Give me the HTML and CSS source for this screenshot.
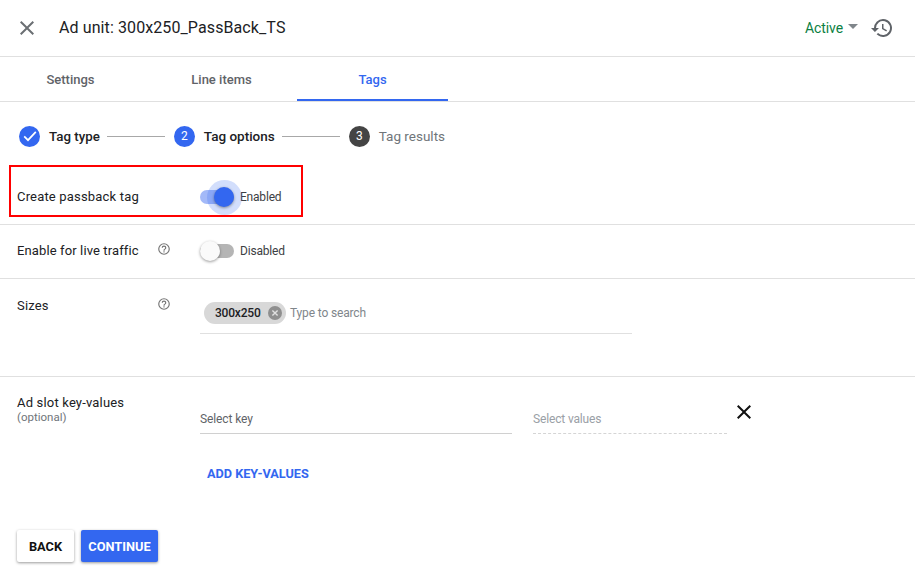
FILE: index.html
```html
<!DOCTYPE html>
<html lang="en">
<head>
<meta charset="utf-8">
<title>Ad unit</title>
<link rel="stylesheet" href="styles.css">
</head>
<body>
<header class="topbar">
  <svg class="close" width="24" height="24" viewBox="0 0 24 24"><path d="M19 6.41 17.59 5 12 10.59 6.41 5 5 6.41 10.59 12 5 17.59 6.41 19 12 13.41 17.59 19 19 17.59 13.41 12z"/></svg>
  <h1 class="title">Ad unit: 300x250_PassBack_TS</h1>
  <span class="status">Active</span>
  <span class="caret"></span>
  <svg class="history" width="24" height="24" viewBox="0 0 24 24"><path d="M13 3a9 9 0 0 0-9 9H1l3.89 3.89.07.14L9 12H6a7 7 0 1 1 2.05 4.95l-1.42 1.42A9 9 0 1 0 13 3zm-1 5v5l4.28 2.54.72-1.21-3.5-2.08V8z"/></svg>
</header>
<nav class="tabs">
  <span class="tab">Settings</span>
  <span class="tab">Line items</span>
  <span class="tab tab-active">Tags</span>
</nav>
<div class="stepper">
  <span class="dot dot-blue"><svg width="18" height="18" viewBox="0 0 18 18"><path d="M3.2 9.4 7 13.2l7.8-8.4" fill="none" stroke="#fff" stroke-width="1.7"/></svg></span>
  <span class="step step-one">Tag type</span>
  <span class="line"></span>
  <span class="dot dot-blue">2</span>
  <span class="step step-two">Tag options</span>
  <span class="line"></span>
  <span class="dot dot-dark">3</span>
  <span class="step step-muted">Tag results</span>
</div>
<section class="row row-pass">
  <div class="label">Create passback tag</div>
  <div class="toggle toggle-on"><span class="track"></span><span class="halo"></span><span class="knob"></span></div>
  <span class="state">Enabled</span>
  <div class="redbox"></div>
</section>
<section class="row row-live">
  <div class="label">Enable for live traffic</div>
  <svg class="help" width="14" height="14" viewBox="0 0 24 24"><path d="M11 18h2v-2h-2v2zm1-16a10 10 0 1 0 0 20 10 10 0 0 0 0-20zm0 18a8 8 0 1 1 0-16 8 8 0 0 1 0 16zm0-14a4 4 0 0 0-4 4h2a2 2 0 1 1 4 0c0 2-3 1.75-3 5h2c0-2.25 3-2.5 3-5a4 4 0 0 0-4-4z"/></svg>
  <div class="toggle toggle-off"><span class="track"></span><span class="knob"></span></div>
  <span class="state">Disabled</span>
</section>
<section class="row row-sizes">
  <div class="label">Sizes</div>
  <svg class="help" width="14" height="14" viewBox="0 0 24 24"><path d="M11 18h2v-2h-2v2zm1-16a10 10 0 1 0 0 20 10 10 0 0 0 0-20zm0 18a8 8 0 1 1 0-16 8 8 0 0 1 0 16zm0-14a4 4 0 0 0-4 4h2a2 2 0 1 1 4 0c0 2-3 1.75-3 5h2c0-2.25 3-2.5 3-5a4 4 0 0 0-4-4z"/></svg>
  <div class="sizes-field">
    <span class="chip">300x250<svg width="14" height="14" viewBox="0 0 14 14"><circle cx="7" cy="7" r="7" fill="#8f8f8f"/><path d="m4.4 4.4 5.2 5.2m0-5.2-5.2 5.2" stroke="#e0e0e0" stroke-width="1.4"/></svg></span>
    <span class="placeholder">Type to search</span>
  </div>
</section>
<section class="row-kv">
  <div class="kv-label">
    <div class="label">Ad slot key-values</div>
    <div class="optional">(optional)</div>
  </div>
  <div class="key-field">Select key</div>
  <div class="values-field">Select values</div>
  <svg class="kv-x" width="24" height="24" viewBox="0 0 24 24"><path d="M19 6.41 17.59 5 12 10.59 6.41 5 5 6.41 10.59 12 5 17.59 6.41 19 12 13.41 17.59 19 19 17.59 13.41 12z"/></svg>
</section>
<div class="add">ADD KEY-VALUES</div>
<footer class="actions">
  <button class="btn btn-back">BACK</button>
  <button class="btn btn-continue">CONTINUE</button>
</footer>
</body>
</html>
```

FILE: styles.css
```css
* { box-sizing: border-box; }
html, body { margin: 0; padding: 0; }
body {
  width: 915px;
  height: 588px;
  overflow: hidden;
  background: #fff;
  font-family: Roboto, "Liberation Sans", sans-serif;
  color: #212121;
}
.topbar {
  height: 57px;
  border-bottom: 1px solid #e0e0e0;
  display: flex;
  align-items: center;
  padding: 0 21px 1px 15px;
}
.close { fill: #6b6f73; flex: none; }
.title {
  margin: 0 0 0 20px;
  font-size: 16px;
  font-weight: 400;
  color: #202124;
  letter-spacing: 0.1px;
  flex: 1;
}
.status { color: #0b8043; font-size: 14px; letter-spacing: -0.1px; margin-top: 1px; }
.caret {
  width: 0; height: 0;
  margin: 0 0 2px 5px;
  border-left: 5px solid transparent;
  border-right: 5px solid transparent;
  border-top: 5px solid #80868b;
}
.history { fill: #5f6368; margin-left: 12px; }
.tabs {
  height: 45px;
  display: flex;
  padding-left: 0;
  border-bottom: 1px solid #e0e0e0;
}
.tab {
  width: 151px;
  text-align: center;
  font-size: 13px;
  font-weight: 500;
  line-height: 46px;
  color: #5f6368;
  height: 44px;
}
.tab:nth-child(1) { width: 141px; }
.tab:nth-child(2) { width: 156px; padding-left: 5px; }
.tab-active {
  color: #3367f0;
  border-bottom: 2px solid #3367f0;
}
.stepper {
  display: flex;
  align-items: center;
  height: 68px;
  margin-bottom: 1px;
  padding: 0 0 0 19px;
}
.dot {
  width: 21px; height: 21px;
  border-radius: 50%;
  color: #fff;
  font-size: 12px;
  display: flex;
  align-items: center;
  justify-content: center;
  flex: none;
}
.dot-blue { background: #3367f0; }
.dot-dark { background: #444; }
.step { font-size: 13.5px; margin-left: 9px; color: #202124; white-space: nowrap; font-weight: 500; }
.step-one { font-size: 13.3px; }
.step-muted { color: #70757a; font-weight: 400; }
.line { width: 58px; height: 1px; background: #a8a8a8; margin: 0 9px 0 7px; flex: none; }
.row {
  display: flex;
  align-items: center;
  position: relative;
  border-bottom: 1px solid #e0e0e0;
  padding-left: 17px;
}
.label { font-size: 13px; color: #202124; letter-spacing: 0.18px; }
.row-pass { height: 54px; padding-bottom: 2px; }
.row-pass .label { width: 183px; }
.row-live { height: 54px; padding-bottom: 2px; }
.row-live .label { width: 140px; letter-spacing: 0.12px; }
.help { fill: #757575; margin-right: 29px; flex: none; }
.row-live .help { margin-top: -3px; }
.toggle { position: relative; width: 34px; height: 14px; flex: none; }
.track { position: absolute; inset: 0; border-radius: 7px; }
.toggle-on .track { background: #a3b9f8; }
.toggle-off .track { background: #b5b5b5; }
.knob {
  position: absolute;
  top: -3px;
  width: 20px; height: 20px;
  border-radius: 50%;
  box-shadow: 0 1px 3px rgba(0,0,0,.4);
}
.toggle-on .knob { background: #3367f0; right: 0; }
.toggle-off .knob { background: #fafafa; left: 0; }
.halo {
  position: absolute;
  left: 7px; top: -10px;
  width: 35px; height: 35px;
  border-radius: 50%;
  background: rgba(51,103,240,.22);
}
.state { font-size: 12px; letter-spacing: -0.2px; margin-left: 6px; color: #3c4043; }
.redbox {
  position: absolute;
  left: 9px; top: -6px;
  width: 294px; height: 52px;
  border: 2px solid #f00;
}
.row-sizes { height: 98px; align-items: flex-start; padding-top: 19px; }
.row-sizes .label { width: 140px; }
.row-sizes .help { margin-top: -1px; }
.sizes-field {
  width: 432px;
  height: 32px;
  margin-top: 4px;
  padding-left: 4px;
  display: flex;
  align-items: flex-start;
  border-bottom: 1px solid #e0e0e0;
}
.chip {
  display: flex;
  align-items: center;
  justify-content: space-between;
  height: 22px;
  width: 82px;
  border-radius: 11px;
  background: #d8d8d8;
  font-size: 12px;
  letter-spacing: -0.2px;
  font-weight: 500;
  color: #202124;
  padding: 0 4px 0 11px;
}
.placeholder { font-size: 12px; letter-spacing: -0.15px; color: #80868b; margin-left: 4px; line-height: 22px; }
.row-kv { display: flex; align-items: flex-start; padding: 18px 0 0 17px; height: 77px; }
.kv-label { width: 183px; }
.optional { font-size: 11.5px; color: #70757a; margin-top: 1px; line-height: 13px; }
.key-field {
  width: 312px; height: 39px;
  font-size: 12px; letter-spacing: -0.1px; color: #5f6368;
  padding-top: 17px;
  border-bottom: 1px solid #d0d0d0;
}
.values-field {
  width: 194px; height: 39px;
  margin-left: 21px;
  font-size: 12px; letter-spacing: -0.15px; color: #9aa0a6;
  padding-top: 17px;
  border-bottom: 1px dashed #d5d5d5;
}
.kv-x { fill: #111; margin: 5px 0 0 5px; }
.add {
  font-size: 12.7px; font-weight: 700;
  line-height: 14px;
  color: #3367f0;
  margin: 13px 0 0 207px;
}
.actions { display: flex; gap: 7px; padding: 49px 0 0 17px; }
.btn {
  height: 32px;
  border: 0;
  border-radius: 2px;
  font-family: inherit;
  font-size: 12.8px;
  font-weight: 700;
  box-shadow: 0 1px 3px rgba(0,0,0,.4);
  padding: 1px 0 0;
}
.btn-back { width: 57px; background: #fff; color: #111; }
.btn-continue { width: 77px; background: #3367f0; color: #fff; }
```
